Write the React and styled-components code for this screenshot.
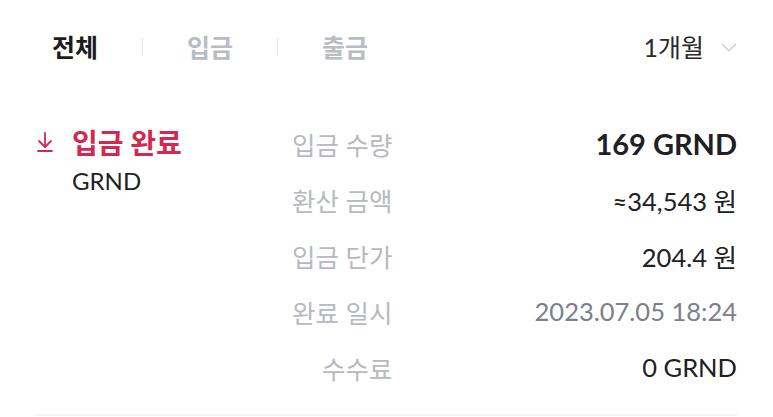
import styled, { createGlobalStyle } from "styled-components";
import { ArrowDownToLine } from "lucide-react";

const GlobalStyle = createGlobalStyle`
  html, body {
    margin: 0;
    background: #fff;
    font-family: Lato, "Noto Sans CJK KR", sans-serif;
    -webkit-font-smoothing: antialiased;
  }
`

const Page = styled.div`
  width: 773px;
  padding: 0 36px;
  box-sizing: border-box;
`

const Header = styled.div`
  height: 94px;
  display: flex;
  align-items: center;
  justify-content: space-between;
  padding-left: 16px;
`

const Tabs = styled.div`
  display: flex;
  align-items: center;
  gap: 44px;
`

const Tab = styled.span`
  font-size: 25px;
  font-weight: 700;
  line-height: 32px;
  color: ${(p) => (p.$active ? "#1c1c1e" : "#b9bcc2")};
`

const Divider = styled.span`
  width: 1px;
  height: 18px;
  background: #e6e7ea;
`

const Period = styled.button`
  display: flex;
  align-items: center;
  gap: 17px;
  border: none;
  background: none;
  padding: 0;
  font-family: inherit;
  font-size: 25px;
  line-height: 32px;
  color: #2a2a2c;
`

const Section = styled.div`
  display: flex;
  margin-top: 21px;
`

const Summary = styled.div`
  width: 256px;
  padding-top: 11px;
`

const Title = styled.div`
  display: flex;
  align-items: center;
  gap: 15px;
  height: 32px;
  margin-left: -3px;
  font-size: 28px;
  font-weight: 700;
  color: #d3284f;
`

const Coin = styled.div`
  margin: 8px 0 0 36px;
  font-size: 24px;
  line-height: 30px;
  color: #222;
`

const Details = styled.div`
  flex: 1;
  display: grid;
  grid-template-columns: auto 1fr;
  grid-auto-rows: 56px;
  align-items: center;
`

const Label = styled.div`
  text-align: right;
  font-size: 25.5px;
  color: #b6b9bf;
`

const Value = styled.div`
  text-align: right;
  font-size: ${(p) => (p.$strong ? "29px" : "25.5px")};
  font-weight: ${(p) => (p.$strong ? 700 : 400)};
  color: ${(p) => p.$tone || "#202022"};
`

const Rule = styled.div`
  margin-top: 19px;
  height: 2px;
  background: #f3f3f4;
`

const rows = [
  { label: "입금 수량", value: "169 GRND", strong: true },
  { label: "환산 금액", value: "≈34,543 원" },
  { label: "입금 단가", value: "204.4 원" },
  { label: "완료 일시", value: "2023.07.05 18:24", tone: "#7b808a" },
  { label: "수수료", value: "0 GRND" },
];

function Chevron() {
  return (
    <svg width="16" height="9" viewBox="0 0 16 9" fill="none">
      <polyline points="1,1 8,8 15,1" stroke="#c4c6cb" strokeWidth="1.1" />
    </svg>
  );
}

export default function App() {
  return (
    <Page>
      <GlobalStyle />
      <Header>
        <Tabs>
          <Tab $active>전체</Tab>
          <Divider />
          <Tab>입금</Tab>
          <Divider />
          <Tab>출금</Tab>
        </Tabs>
        <Period>
          1개월
          <Chevron />
        </Period>
      </Header>

      <Section>
        <Summary>
          <Title>
            <ArrowDownToLine size={24} strokeWidth={1.8} />
            입금 완료
          </Title>
          <Coin>GRND</Coin>
        </Summary>
        <Details>
          {rows.map((row) => (
            <>
              <Label key={row.label}>{row.label}</Label>
              <Value key={row.label + "v"} $strong={row.strong} $tone={row.tone}>
                {row.value}
              </Value>
            </>
          ))}
        </Details>
      </Section>
      <Rule />
    </Page>
  );
}
